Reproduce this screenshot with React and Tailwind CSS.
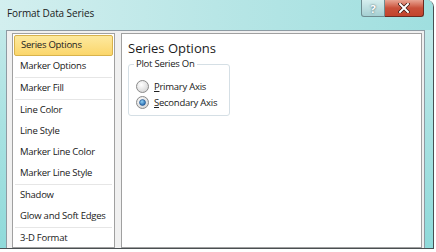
import React from "react";

const items = [
  { t: "Series Options", sel: true },
  { t: "Marker Options", sep: true },
  { t: "Marker Fill", sep: true },
  { t: "Line Color" },
  { t: "Line Style" },
  { t: "Marker Line Color" },
  { t: "Marker Line Style", sep: true },
  { t: "Shadow" },
  { t: "Glow and Soft Edges", sep: true },
  { t: "3-D Format" },
];

function Radio({ checked }) {
  return (
    <svg width="13" height="13" viewBox="0 0 13 13" className="shrink-0">
      <defs>
        <radialGradient id={checked ? "rg1" : "rg0"} cx="0.4" cy="0.35" r="0.7">
          <stop offset="0" stopColor="#ffffff" />
          <stop offset="1" stopColor="#d4d4d4" />
        </radialGradient>
        <radialGradient id="dot" cx="0.4" cy="0.35" r="0.7">
          <stop offset="0" stopColor="#8fd0f5" />
          <stop offset="1" stopColor="#1a5fa8" />
        </radialGradient>
      </defs>
      <circle cx="6.5" cy="6.5" r="6" fill={`url(#${checked ? "rg1" : "rg0"})`} stroke="#8a8a8a" strokeWidth="1" />
      {checked && <circle cx="6.5" cy="6.5" r="3" fill="url(#dot)" stroke="#1e4f86" strokeWidth="0.6" />}
    </svg>
  );
}

export default function App() {
  return (
    <div className="w-[436px] h-[252px] bg-white overflow-hidden" style={{ fontFamily: '"Open Sans", "Noto Sans", sans-serif' }}>
      <div className="w-[434px] h-[249px] flex flex-col rounded-tr-[7px] border-r border-b border-[#4a4f52] bg-gradient-to-b from-[#c9ebeb] via-[#a9e2e2] to-[#8fdada] overflow-hidden">
        <div className="h-[30px] flex items-start shrink-0 bg-gradient-to-r from-[#d3efef] via-[#b8e6e6] to-[#9fdfdf]">
          <div className="pl-[7px] pt-[7px] text-[10px] tracking-[-0.1px] text-[#1b1b1b] leading-[13px]">Format Data Series</div>
          <div className="flex-1" />
          <div className="w-[24px] h-[17px] mt-0 rounded-bl-[3px] border border-t-0 border-[#6e8c90] bg-gradient-to-b from-[#d6eeee] to-[#a5cfd2] flex items-center justify-center text-[11px] font-bold text-[#ffffff] leading-none" style={{ textShadow: "0 0 2px #304a50" }}>?</div>
          <div className="w-[39px] h-[17px] mr-[9px] rounded-br-[3px] border border-t-0 border-l-0 border-[#6b2a20] bg-gradient-to-b from-[#e8a493] via-[#c9503a] to-[#c2442d] flex items-center justify-center">
            <svg width="12" height="10" viewBox="0 0 12 10">
              <path d="M2 1 L10 9 M10 1 L2 9" stroke="#3a1510" strokeWidth="3.4" strokeLinecap="square" />
              <path d="M2 1 L10 9 M10 1 L2 9" stroke="#ffffff" strokeWidth="2" strokeLinecap="square" />
            </svg>
          </div>
        </div>
        <div className="flex-1 flex ml-[6px] mr-[8px] border-l border-r border-t border-[#8e9ba3] bg-[#f0f0f0] pl-[5px] pt-[2px] pr-[2px] min-h-0">
          <div className="w-[103px] border border-[#a0a0a0] bg-white pt-[1px] px-[1px] shrink-0">
            {items.map((it, i) => (
              <div key={i}>
                <div
                  className={
                    "h-[21px] flex items-center pl-[6px] text-[9.5px] tracking-[-0.25px] text-[#202020] whitespace-nowrap " +
                    (it.sel ? "rounded-[2px] border border-[#d8b34c] bg-gradient-to-b from-[#fde99e] to-[#fbd66a] pl-[5px]" : "")
                  }
                >
                  {it.t}
                </div>
                {it.sep && <div className="h-px mx-[1px] bg-[#e6e6e6]" />}
              </div>
            ))}
          </div>
          <div className="flex-1 ml-[6px] border border-[#a0a0a0] bg-white pl-[6px] pt-[7px]">
            <div className="text-[13px] text-[#1b1b1b] leading-[15px]">Series Options</div>
            <div className="relative mt-[8px] w-[102px] h-[52px] border border-[#d5dfe5] rounded-[3px]">
              <div className="absolute left-[5px] -top-[7px] bg-white px-[2px] text-[9.5px] tracking-[-0.25px] text-[#202020] leading-[12px]">Plot Series On</div>
              <div className="flex flex-col gap-[3px] pt-[15px] pl-[7px]">
                <div className="flex items-center gap-[5px] text-[9.5px] tracking-[-0.25px] text-[#202020] leading-[13px]">
                  <Radio />
                  <span><span className="underline">P</span>rimary Axis</span>
                </div>
                <div className="flex items-center gap-[5px] text-[9.5px] tracking-[-0.25px] text-[#202020] leading-[13px]">
                  <Radio checked />
                  <span><span className="underline">S</span>econdary Axis</span>
                </div>
              </div>
            </div>
          </div>
        </div>
      </div>
    </div>
  );
}
